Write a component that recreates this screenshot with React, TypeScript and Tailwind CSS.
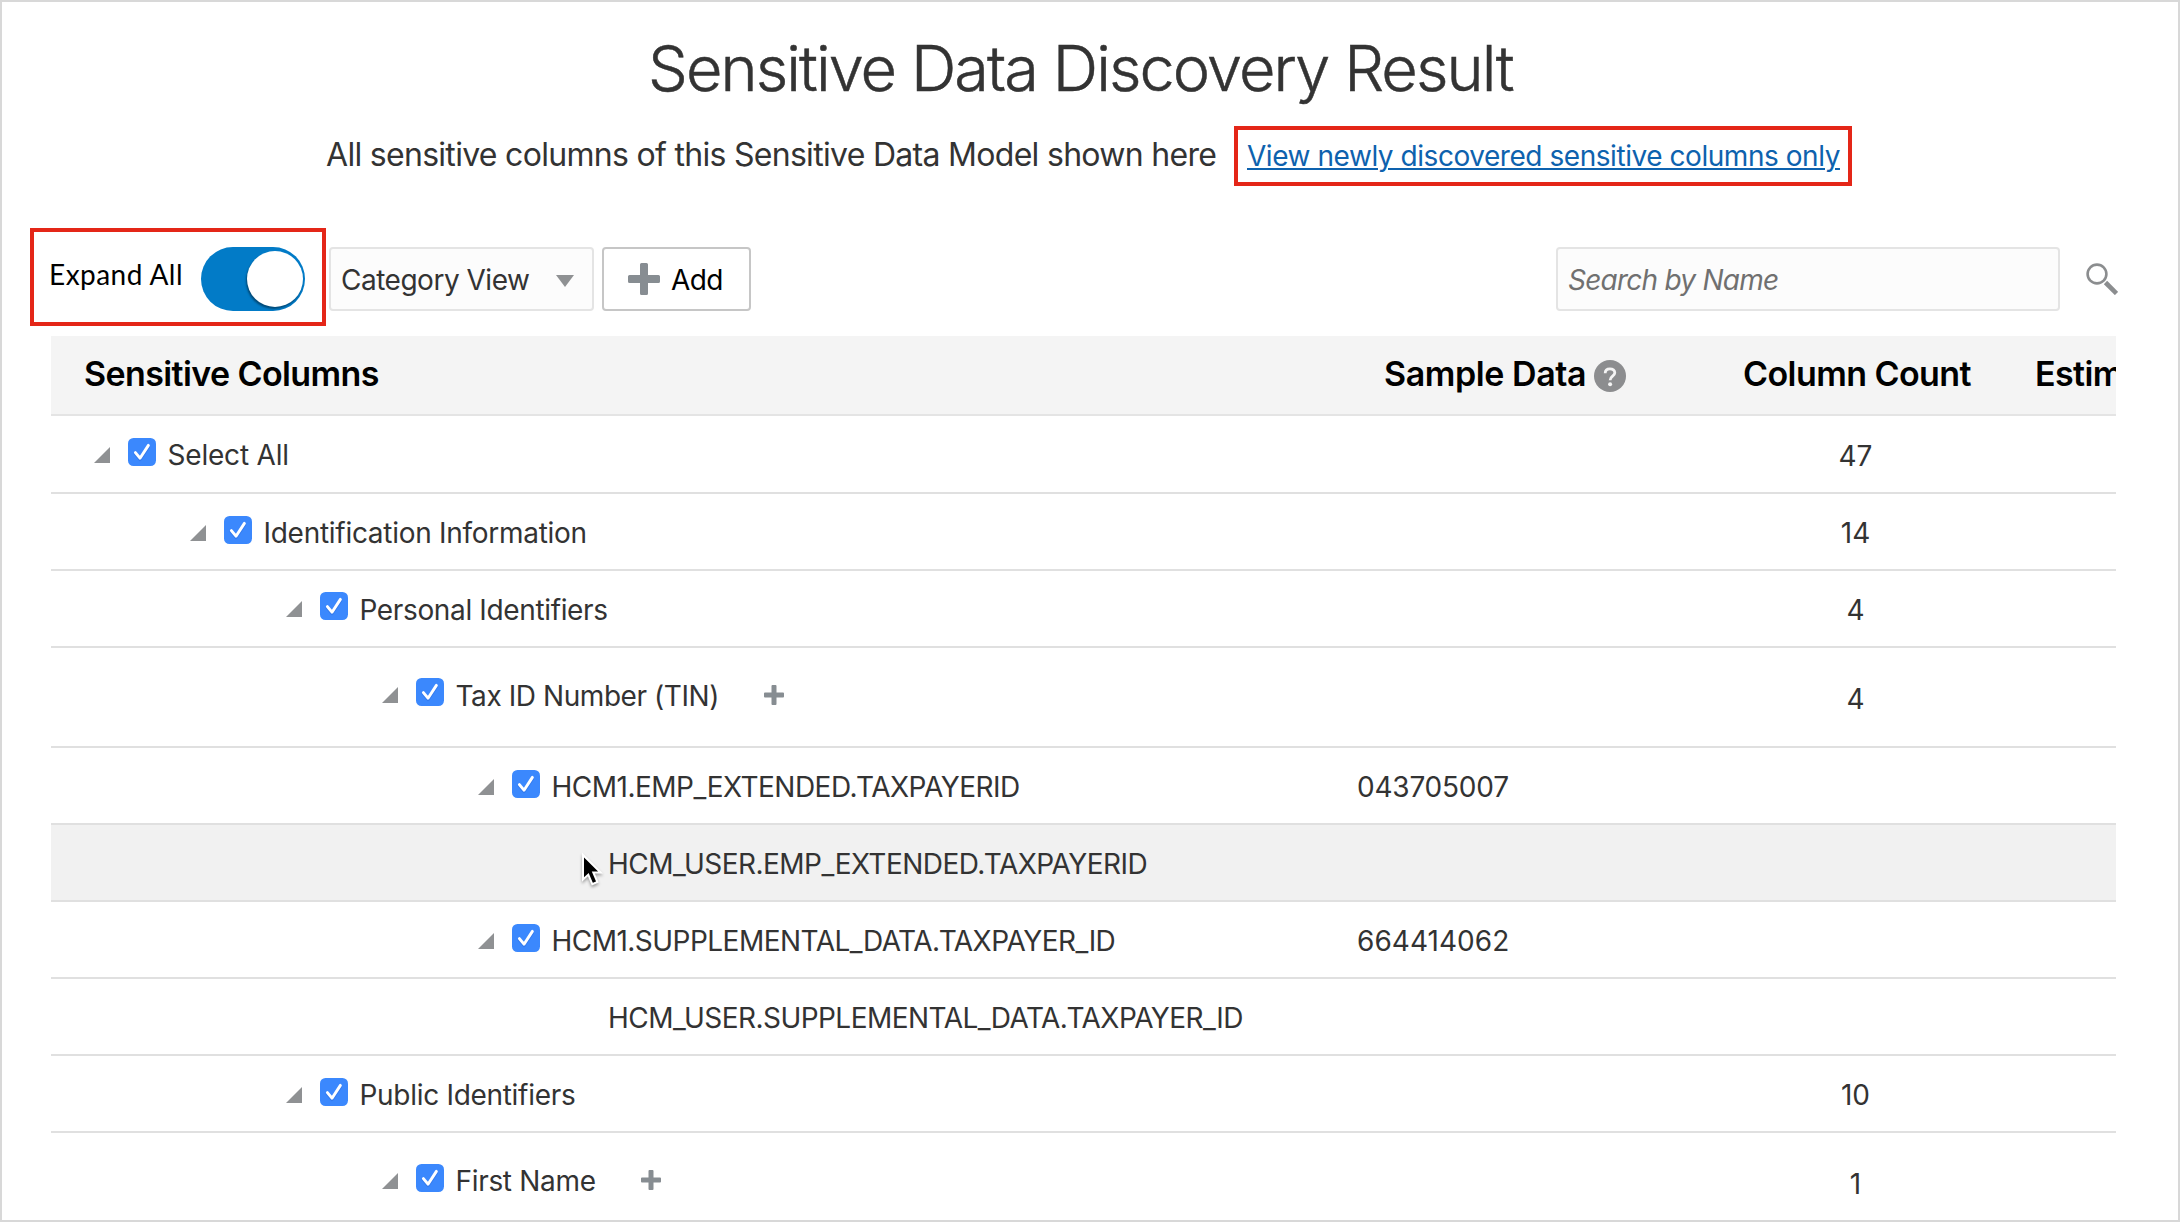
type Row = {
  label: string;
  indent: string;
  spacing: string;
  height: string;
  pad: string;
  boxTop?: string;
  addGap?: string;
  sample?: string;
  sampleSpacing?: string;
  count?: string;
  countTop?: string;
  hovered?: boolean;
};

const rows: Row[] = [
  { label: "Select All", indent: "pl-[43px]", spacing: "tracking-[-0.2px]", height: "h-[78px]", pad: "pt-[21px]", boxTop: "mt-px", count: "47", countTop: "mt-px" },
  { label: "Identification Information", indent: "pl-[139px]", spacing: "tracking-[-0.28px]", height: "h-[77px]", pad: "pt-[21px]", boxTop: "mt-px", count: "14" },
  { label: "Personal Identifiers", indent: "pl-[235px]", spacing: "tracking-[-0.36px]", height: "h-[77px]", pad: "pt-[21px]", boxTop: "mt-0", count: "4" },
  { label: "Tax ID Number (TIN)", indent: "pl-[331px]", spacing: "tracking-[-0.43px]", height: "h-[100px]", pad: "pt-[30px]", boxTop: "mt-0", addGap: "ml-[45px]", count: "4", countTop: "mt-[3px]" },
  { label: "HCM1.EMP_EXTENDED.TAXPAYERID", indent: "pl-[427px]", spacing: "tracking-[-0.51px]", height: "h-[77px]", pad: "pt-[21px]", boxTop: "mt-px", sample: "043705007", sampleSpacing: "tracking-[-0.22px]" },
  { label: "HCM_USER.EMP_EXTENDED.TAXPAYERID", indent: "pl-[557px]", spacing: "tracking-[-0.54px]", height: "h-[77px]", pad: "pt-[21px]", hovered: true },
  { label: "HCM1.SUPPLEMENTAL_DATA.TAXPAYER_ID", indent: "pl-[427px]", spacing: "tracking-[-0.53px]", height: "h-[77px]", pad: "pt-[21px]", boxTop: "mt-px", sample: "664414062", sampleSpacing: "tracking-[0.04px]" },
  { label: "HCM_USER.SUPPLEMENTAL_DATA.TAXPAYER_ID", indent: "pl-[557px]", spacing: "tracking-[-0.55px]", height: "h-[77px]", pad: "pt-[21px]" },
  { label: "Public Identifiers", indent: "pl-[235px]", spacing: "tracking-[-0.3px]", height: "h-[77px]", pad: "pt-[21px]", boxTop: "mt-px", count: "10" },
  { label: "First Name", indent: "pl-[331px]", spacing: "tracking-[-0.32px]", height: "h-[100px]", pad: "pt-[30px]", boxTop: "mt-px", addGap: "ml-[45px]", count: "1", countTop: "mt-[3px]" },
];

function Disclosure() {
  return (
    <svg className="mt-[9px] h-4 w-4 shrink-0" viewBox="0 0 16 16">
      <path d="M16 0V16H0Z" fill="#8f9193" />
    </svg>
  );
}

function Checkbox() {
  return (
    <svg className="ml-[18px] h-7 w-7 shrink-0" viewBox="0 0 28 28">
      <rect width="28" height="28" rx="5.5" fill="#3b88fd" />
      <path d="M7 15.6L12 21.6L20.6 8.6" fill="none" stroke="#1f5fd0" strokeOpacity=".35" strokeWidth="3" strokeLinecap="round" strokeLinejoin="round" />
      <path d="M7.4 14.6L12 20.2L20.4 7.4" fill="none" stroke="#fff" strokeWidth="2.9" strokeLinecap="round" strokeLinejoin="round" />
    </svg>
  );
}

function Plus({ className }: { className: string }) {
  return (
    <svg className={className} viewBox="0 0 32 32">
      <path d="M12 1.5Q12 0 13.5 0H18.5Q20 0 20 1.5V12H30.5Q32 12 32 13.5V18.5Q32 20 30.5 20H20V30.5Q20 32 18.5 32H13.5Q12 32 12 30.5V20H1.5Q0 20 0 18.5V13.5Q0 12 1.5 12H12Z" fill="#878d92" />
    </svg>
  );
}

function Pointer() {
  return (
    <svg className="absolute top-[25px] left-[528px] h-[42px] w-[28px] drop-shadow-[0_2px_1.5px_rgba(0,0,0,0.35)]" viewBox="0 0 28 42">
      <path d="M4 5V29.4L9.3 24.6L13.3 34.2L18.4 32L14.3 22.5H21.6Z" fill="#000" stroke="#fff" strokeWidth="2" />
    </svg>
  );
}

export default function App() {
  return (
    <div className="h-[1222px] w-full overflow-hidden border-2 border-[#d8d8d8] bg-white font-['Inter',sans-serif] text-[28px] leading-9 text-[#333333]">
      <h1 className="mt-[34px] ml-[646px] text-[63px] leading-[64px] font-light tracking-[-1.92px] whitespace-nowrap [-webkit-text-stroke:0.5px_#333333]">
        Sensitive Data Discovery Result
      </h1>

      <div className="mt-[26px] ml-[324px] flex h-[60px] items-center whitespace-nowrap">
        <p className="-mt-[3px] w-[908px] text-[32px] leading-10 tracking-[-0.7px]">
          All sensitive columns of this Sensitive Data Model shown here
        </p>
        <div className="flex h-[60px] w-[618px] items-center border-4 border-[#e42618] pl-[9px]">
          <a href="#" className="tracking-[-0.45px] text-[#0e62ae] underline decoration-2 underline-offset-[2px] [text-decoration-skip-ink:auto]">
            View newly discovered sensitive columns only
          </a>
        </div>
      </div>

      <div className="mt-[42px] ml-[28px] flex h-[98px] items-center whitespace-nowrap">
        <div className="flex h-[98px] w-[296px] items-center border-4 border-[#e42618] pl-[15px]">
          <span className="-mt-[6px] w-[152px] font-['Lato',sans-serif] tracking-[0.46px] text-black">Expand All</span>
          <div className="mt-1 flex h-16 w-[104px] items-center justify-end rounded-full bg-[#027bc7] pr-[2px]">
            <div className="h-14 w-14 rounded-full bg-white shadow-[-1px_2px_2px_rgba(0,0,0,0.4)]" />
          </div>
        </div>
        <div className="mt-1 ml-[3px] flex h-16 w-[265px] items-center rounded-[4px] border-2 border-[#e4e4e4] bg-[#fcfcfc] pl-[10px]">
          <span className="mt-[2px] w-[215px] tracking-[-0.49px]">Category View</span>
          <svg className="mt-[3px] h-3 w-[18px]" viewBox="0 0 18 12">
            <path d="M0 0H18L9 12Z" fill="#8f9193" />
          </svg>
        </div>
        <button className="mt-1 ml-2 flex h-16 w-[149px] items-center rounded-[4px] border-2 border-[#c6c6c6] bg-white pl-6 text-black">
          <Plus className="h-8 w-8" />
          <span className="mt-[2px] ml-[11px] tracking-[-0.6px]">Add</span>
        </button>
        <input
          placeholder="Search by Name"
          className="mt-1 ml-[805px] h-16 w-[504px] rounded-[4px] border-2 border-[#e4e4e4] bg-[#fcfcfc] pt-[2px] pl-[10px] tracking-[-0.76px] outline-none placeholder:text-[#707070] placeholder:italic"
        />
        <svg className="mt-1 ml-[26px] h-8 w-8" viewBox="0 0 32 32">
          <circle cx="11" cy="11" r="9.4" fill="none" stroke="#8b8d8f" strokeWidth="2.6" />
          <path d="M19.5 19.5L30.5 30.5" stroke="#8b8d8f" strokeWidth="4.6" />
        </svg>
      </div>

      <div className="mt-[10px] ml-[49px] w-[2065px] overflow-hidden">
        <div className="grid h-20 grid-cols-[1305px_314px_365px_81px] items-center border-b-2 border-[#e4e4e4] bg-[#f4f4f4] pb-[3px] text-[34px] leading-10 font-semibold whitespace-nowrap text-black">
          <div className="pl-[33px] tracking-[-0.6px]">Sensitive Columns</div>
          <div className="flex items-center pl-[28px]">
            <span className="w-[210px] tracking-[-0.42px]">Sample Data</span>
            <svg className="mt-[5px] h-8 w-8" viewBox="0 0 32 32">
              <circle cx="16" cy="16" r="16" fill="#8c8d8f" />
              <path d="M11.2 13.2C11.2 10.1 13.2 8.8 15.9 8.8C18.8 8.8 20.8 10.4 20.8 12.8C20.8 16.2 16.1 16.2 16.1 20.2" fill="none" stroke="#f4f4f4" strokeWidth="2.8" />
              <circle cx="16.1" cy="24.2" r="2" fill="#f4f4f4" />
            </svg>
          </div>
          <div className="pl-[73px] tracking-[-0.57px]">Column Count</div>
          <div className="overflow-hidden tracking-[-0.6px]">Estim</div>
        </div>

        {rows.map((row) => (
          <div
            key={row.label}
            className={`grid grid-cols-[1305px_314px_370px_76px] items-start border-b-2 border-[#e0e0e0] whitespace-nowrap ${row.height} ${row.pad} ${row.hovered ? "relative bg-[#f1f1f1]" : ""}`}
          >
            <div className={`flex items-start ${row.indent}`}>
              {row.boxTop && (
                <div className={`mr-[11.5px] flex ${row.boxTop}`}>
                  <Disclosure />
                  <Checkbox />
                </div>
              )}
              <span className={row.spacing}>{row.label}</span>
              {row.addGap && <Plus className={`mt-[7px] h-5 w-5 shrink-0 ${row.addGap}`} />}
            </div>
            <div className={`pl-px ${row.sampleSpacing ?? ""}`}>{row.sample}</div>
            <div className={`pl-px text-center ${row.countTop ?? ""}`}>{row.count}</div>
            {row.hovered && <Pointer />}
          </div>
        ))}
      </div>
    </div>
  );
}
